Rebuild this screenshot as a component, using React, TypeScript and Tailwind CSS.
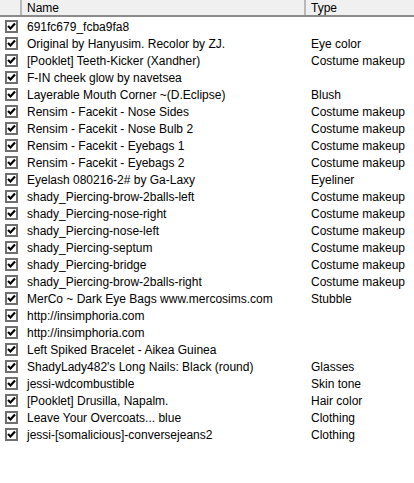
const rows: [string, string][] = [
  ['691fc679_fcba9fa8', ''],
  ['Original by Hanyusim. Recolor by ZJ.', 'Eye color'],
  ['[Pooklet] Teeth-Kicker (Xandher)', 'Costume makeup'],
  ['F-IN cheek glow by navetsea', ''],
  ['Layerable Mouth Corner ~(D.Eclipse)', 'Blush'],
  ['Rensim - Facekit - Nose Sides', 'Costume makeup'],
  ['Rensim - Facekit - Nose Bulb 2', 'Costume makeup'],
  ['Rensim - Facekit - Eyebags 1', 'Costume makeup'],
  ['Rensim - Facekit - Eyebags 2', 'Costume makeup'],
  ['Eyelash 080216-2# by Ga-Laxy', 'Eyeliner'],
  ['shady_Piercing-brow-2balls-left', 'Costume makeup'],
  ['shady_Piercing-nose-right', 'Costume makeup'],
  ['shady_Piercing-nose-left', 'Costume makeup'],
  ['shady_Piercing-septum', 'Costume makeup'],
  ['shady_Piercing-bridge', 'Costume makeup'],
  ['shady_Piercing-brow-2balls-right', 'Costume makeup'],
  ['MerCo ~ Dark Eye Bags www.mercosims.com', 'Stubble'],
  ['http://insimphoria.com', ''],
  ['http://insimphoria.com', ''],
  ['Left Spiked Bracelet - Aikea Guinea', ''],
  ["ShadyLady482's Long Nails: Black (round)", 'Glasses'],
  ['jessi-wdcombustible', 'Skin tone'],
  ['[Pooklet] Drusilla, Napalm.', 'Hair color'],
  ['Leave Your Overcoats... blue', 'Clothing'],
  ['jessi-[somalicious]-conversejeans2', 'Clothing'],
]

// classic win32 style tick box
function Tick() {
  return (
    <div className="ml-[5px] w-[13px] h-[13px] border-2 border-[#6f6f6f] bg-white flex items-center justify-center">
      <svg width="9" height="9" viewBox="0 0 9 9">
        <path d="M1 4 L3.5 6.5 L8 1.5" fill="none" stroke="#000" strokeWidth="2.2" />
      </svg>
    </div>
  )
}

export default function App() {
  return (
    <div className="w-[414px] h-[483px] bg-white text-black text-[12px] leading-none overflow-hidden" style={{ fontFamily: '"Liberation Sans", Arial, sans-serif' }}>
      <div className="flex h-[17px] bg-[#f0f0f0] border-b-2 border-[#8a8a8a]">
        <div className="w-[22px] border-r-2 border-[#b8b8b8]" />
        <div className="w-[284px] border-r-2 border-[#b8b8b8] pl-[5px] flex items-center">Name</div>
        <div className="flex-1 pl-[5px] flex items-center">Type</div>
      </div>
      <div className="pt-[1px]">
        {rows.map((r, i) => (
          <div key={i} className="flex items-center h-[17px]">
            <div className="w-[22px] flex items-center">
              <Tick />
            </div>
            <div className="w-[284px] pl-[5px] whitespace-nowrap">{r[0]}</div>
            <div className="flex-1 pl-[5px] whitespace-nowrap">{r[1]}</div>
          </div>
        ))}
      </div>
    </div>
  )
}
